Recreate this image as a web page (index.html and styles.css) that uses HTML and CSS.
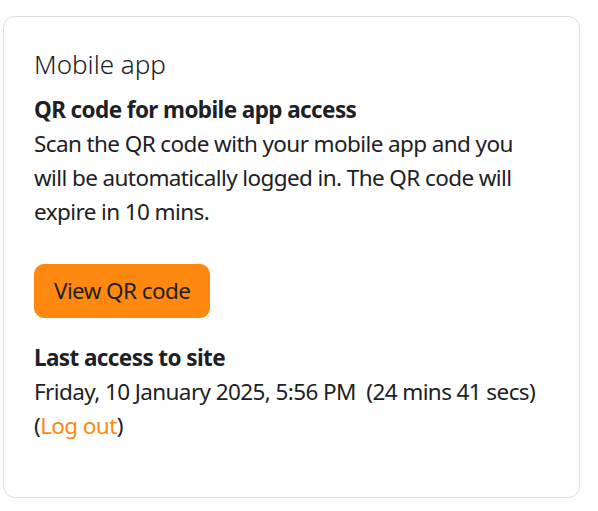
FILE: index.html
```html
<!DOCTYPE html>
<html lang="en">
<head>
<meta charset="utf-8">
<title>Mobile app</title>
<link rel="stylesheet" href="styles.css">
</head>
<body>
<section class="card">
  <h5 class="card-title">Mobile app</h5>
  <div class="block">
    <div class="label">QR code for mobile app access</div>
    <p class="desc">Scan the QR code with your mobile app and you will be automatically logged in. The QR code will expire in 10 mins.</p>
  </div>
  <button class="btn" type="button">View QR code</button>
  <div class="access">
    <div class="label">Last access to site</div>
    <div class="value">Friday, 10 January 2025, 5:56 PM&nbsp; (24 mins 41 secs)</div>
    <div class="value">(<a href="#" class="link">Log out</a>)</div>
  </div>
</section>
</body>
</html>
```
FILE: styles.css
```css
* { box-sizing: border-box; }
html, body { margin: 0; padding: 0; background: #fff; }
body {
  font-family: "Noto Sans", "Open Sans", sans-serif;
  font-size: 22.5px;
  line-height: 34px;
  letter-spacing: -0.6px;
  color: #1d2125;
  padding: 16px 18px 13px 3px;
}
.card {
  border: 1px solid #dedfe0;
  border-radius: 12px;
  padding: 30px 30px 55px 30px;
  width: 577px;
  height: 482px;
}
.card-title {
  margin: 0 0 11px 0;
  font-size: 26px;
  font-weight: 300;
  line-height: 35px;
  letter-spacing: 0;
}
.label { font-weight: 700; }
.desc { margin: 0 0 35px 0; }
.btn {
  display: inline-block;
  font: inherit;
  letter-spacing: inherit;
  line-height: 34px;
  color: #1d2125;
  background: #ff8910;
  border: 1px solid #ff8910;
  border-radius: 10px;
  padding: 9px 19px;
  cursor: pointer;
}
.access { margin-top: 23px; }
.link { color: #ff8910; text-decoration: none; }
```
